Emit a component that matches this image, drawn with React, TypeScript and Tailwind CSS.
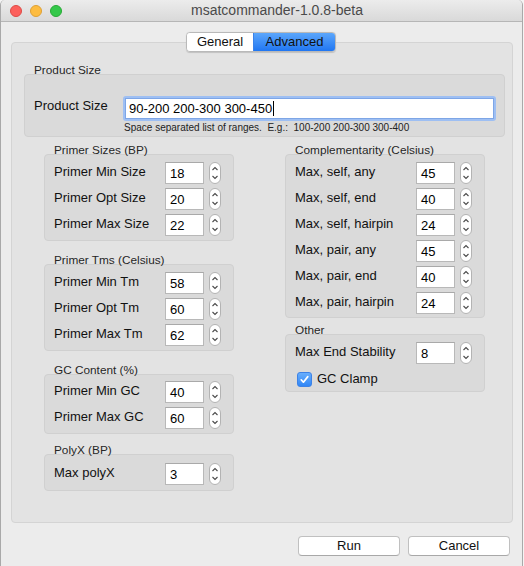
import React from "react";

function Stepper() {
  return (
    <div className="w-[12px] h-[22px] rounded-[6px] bg-white border border-[#b3b3b3] flex items-center justify-center shrink-0">
      <svg width="8" height="16" viewBox="0 0 8 16">
        <path d="M1.5 5 L4 2.5 L6.5 5" stroke="#4a4a4a" strokeWidth="1.1" fill="none" />
        <path d="M1.5 11 L4 13.5 L6.5 11" stroke="#4a4a4a" strokeWidth="1.1" fill="none" />
      </svg>
    </div>
  );
}

function NumRow({ label, value, labelW }: { label: string; value: string; labelW: string }) {
  return (
    <div className="flex items-center h-[22px]">
      <div className={`${labelW} text-[13px] leading-[16px] text-[#111] pb-[2px] whitespace-nowrap`}>{label}</div>
      <div className="w-[39px] h-[22px] bg-white border border-[#b8b8b8] border-t-[#a9a9a9] text-[13px] leading-[20px] pl-[4px] pt-[1px] text-black">
        {value}
      </div>
      <div className="ml-[5px]">
        <Stepper />
      </div>
    </div>
  );
}

function Group({
  title,
  children,
  className = "",
  boxClass = "",
}: {
  title: string;
  children: React.ReactNode;
  className?: string;
  boxClass?: string;
}) {
  return (
    <div className={className}>
      <div className="relative z-10 h-[11px] pl-[10px] text-[11.8px] leading-[14px] text-[#262626] whitespace-nowrap">
        {title}
      </div>
      <div className={`bg-[#dadada] border border-[#d0d0d0] rounded-[4px] pl-[9px] ${boxClass}`}>{children}</div>
    </div>
  );
}

export default function App() {
  return (
    <div className="w-[524px] h-[566px] bg-[#f4f4f4] overflow-hidden font-['Liberation_Sans',Arial,sans-serif]">
      <div className="w-[523px] h-[566px] bg-[#ececec] border-l border-r border-[#a9a9a9] rounded-t-[5px] flex flex-col">
        {/* Title bar */}
        <div className="h-[22px] shrink-0 bg-gradient-to-b from-[#ececec] to-[#d9d9d9] border-b border-[#b6b6b6] rounded-t-[5px] flex items-center relative">
          <div className="flex items-center gap-[8px] pl-[9px]">
            <div className="w-[12px] h-[12px] rounded-full bg-[#fc605c] border border-[#de4a45]" />
            <div className="w-[12px] h-[12px] rounded-full bg-[#fdbc40] border border-[#dea034]" />
            <div className="w-[12px] h-[12px] rounded-full bg-[#34c84a] border border-[#27aa35]" />
          </div>
          <div className="flex-1 flex justify-center pr-[30px] text-[14px] text-[#4a4a4a]">msatcommander-1.0.8-beta</div>
        </div>

        {/* Tabs */}
        <div className="relative z-20 mt-[10px] h-[20px] flex justify-center pr-[1px]">
          <div className="flex h-[20px] rounded-[4px] border border-[#b9b9b9] overflow-hidden shadow-[0_0.5px_1px_rgba(0,0,0,0.15)]">
            <div className="w-[66px] bg-white text-[13px] leading-[18px] text-center text-[#111]">General</div>
            <div className="w-[82px] bg-gradient-to-b from-[#5ba6fb] to-[#1f76f2] text-[13px] leading-[18px] text-center text-[#111] border-l border-[#3a82ea]">
              Advanced
            </div>
          </div>
        </div>

        {/* Panel */}
        <div className="-mt-[10px] ml-[10px] w-[502px] h-[481px] bg-[#e3e3e3] border border-[#d4d4d4] rounded-[4px] pl-[12px] pr-[7px] pt-[20px]">
          {/* Product Size */}
          <div className="relative z-10 h-[11px] pl-[10px] text-[11.8px] leading-[14px] text-[#262626]">Product Size</div>
          <div className="bg-[#dadada] border border-[#d0d0d0] rounded-[4px] h-[63px] pt-[21px] pl-[9px] pr-[8px]">
            <div className="flex items-start h-[25px]">
              <div className="w-[89px] pt-[2px] text-[13px] leading-[16px] text-[#111]">Product Size</div>
              <div className="flex-1 h-[25px] rounded-[3px] bg-[#9ebff3] p-[2px]">
                <div className="h-[21px] bg-white border border-[#7ea6e6] text-[13px] leading-[19px] pl-[3px] text-black flex items-center">
                  <span>90-200 200-300 300-450</span>
                  <span className="inline-block w-[1px] h-[15px] bg-black ml-[1px]" />
                </div>
              </div>
            </div>
            <div className="mt-[1px] ml-[90px] h-[12px] text-[10px] leading-[12px] text-[#222] whitespace-pre">
              {"Space separated list of ranges.  E.g.:  100-200 200-300 300-400"}
            </div>
          </div>

          {/* Columns */}
          <div className="mt-[6px] px-[20px] flex justify-between">
            {/* Left column */}
            <div className="w-[190px] flex flex-col">
              <Group title="Primer Sizes (BP)" boxClass="pt-[7px] pb-[4px]">
                <div className="flex flex-col gap-[4px]">
                  <NumRow label="Primer Min Size" value="18" labelW="w-[111px]" />
                  <NumRow label="Primer Opt Size" value="20" labelW="w-[111px]" />
                  <NumRow label="Primer Max Size" value="22" labelW="w-[111px]" />
                </div>
              </Group>
              <Group title="Primer Tms (Celsius)" className="mt-[12px]" boxClass="pt-[7px] pb-[4px]">
                <div className="flex flex-col gap-[4px]">
                  <NumRow label="Primer Min Tm" value="58" labelW="w-[111px]" />
                  <NumRow label="Primer Opt Tm" value="60" labelW="w-[111px]" />
                  <NumRow label="Primer Max Tm" value="62" labelW="w-[111px]" />
                </div>
              </Group>
              <Group title="GC Content (%)" className="mt-[12px]" boxClass="pt-[6px] pb-[4px]">
                <div className="flex flex-col gap-[4px]">
                  <NumRow label="Primer Min GC" value="40" labelW="w-[111px]" />
                  <NumRow label="Primer Max GC" value="60" labelW="w-[111px]" />
                </div>
              </Group>
              <Group title="PolyX (BP)" className="mt-[9px]" boxClass="pt-[8px] pb-[5px]">
                <NumRow label="Max polyX" value="3" labelW="w-[111px]" />
              </Group>
            </div>

            {/* Right column */}
            <div className="w-[200px] flex flex-col">
              <Group title="Complementarity (Celsius)" boxClass="pt-[7px] pb-[3px]">
                <div className="flex flex-col gap-[4px]">
                  <NumRow label="Max, self, any" value="45" labelW="w-[121px]" />
                  <NumRow label="Max, self, end" value="40" labelW="w-[121px]" />
                  <NumRow label="Max, self, hairpin" value="24" labelW="w-[121px]" />
                  <NumRow label="Max, pair, any" value="45" labelW="w-[121px]" />
                  <NumRow label="Max, pair, end" value="40" labelW="w-[121px]" />
                  <NumRow label="Max, pair, hairpin" value="24" labelW="w-[121px]" />
                </div>
              </Group>
              <Group title="Other" className="mt-[5px]" boxClass="pt-[7px] pb-[4px]">
                <NumRow label="Max End Stability" value="8" labelW="w-[121px]" />
                <div className="mt-[7px] flex items-center gap-[5px] pl-[2px]">
                  <div className="w-[15px] h-[15px] rounded-[3px] bg-gradient-to-b from-[#68aefc] to-[#2f86f6] border border-[#3d82e6] flex items-center justify-center">
                    <svg width="11" height="11" viewBox="0 0 11 11">
                      <path d="M2.2 5.8 L4.4 8.2 L8.8 2.6" stroke="white" strokeWidth="1.7" fill="none" strokeLinecap="round" strokeLinejoin="round" />
                    </svg>
                  </div>
                  <div className="text-[13px] leading-[16px] text-[#111]">GC Clamp</div>
                </div>
              </Group>
            </div>
          </div>
        </div>

        {/* Buttons */}
        <div className="mt-[13px] flex justify-end gap-[8px] pr-[12px]">
          <div className="w-[102px] h-[20px] bg-white border border-[#c0c0c0] border-b-[#a8a8a8] rounded-[4px] text-[13px] leading-[18px] text-center text-[#111]">
            Run
          </div>
          <div className="w-[102px] h-[20px] bg-white border border-[#c0c0c0] border-b-[#a8a8a8] rounded-[4px] text-[13px] leading-[18px] text-center text-[#111]">
            Cancel
          </div>
        </div>
      </div>
    </div>
  );
}
